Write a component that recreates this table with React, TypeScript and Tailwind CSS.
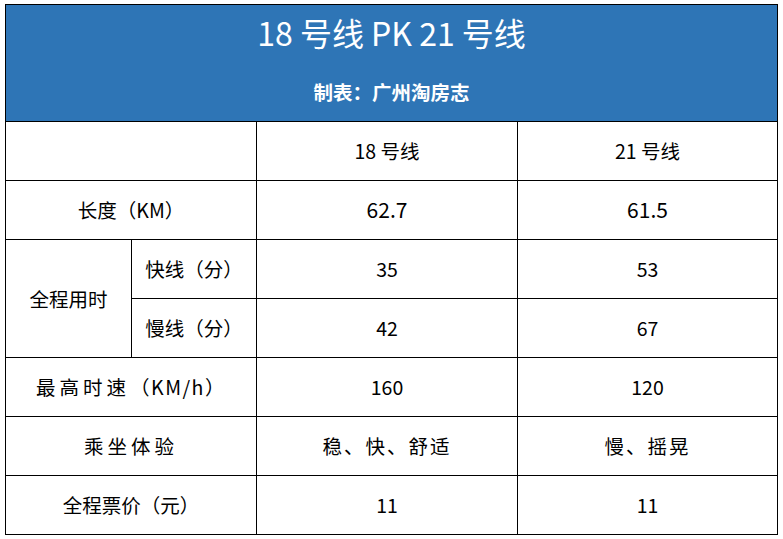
import React from "react";

const font = { fontFamily: '"Noto Sans CJK SC", "Noto Sans", sans-serif' };

export default function App() {
  const td = "border border-black text-center align-middle text-[19.5px] text-black p-0";
  return (
    <div className="w-[783px] h-[539px] bg-white pl-[5px] pt-[4px]" style={font}>
      <table className="border-collapse w-[772px] table-fixed">
        <colgroup>
          <col className="w-[126px]" />
          <col className="w-[125px]" />
          <col className="w-[261px]" />
          <col className="w-[260px]" />
        </colgroup>
        <tbody>
          <tr>
            <td colSpan={4} className="border border-black bg-[#2e75b6] p-0 h-[117px] align-top">
              <div className="flex flex-col items-center text-white pt-[7px]">
                <div className="text-[32px] leading-[40px]">18 号线 PK 21 号线</div>
                <div className="text-[19.5px] leading-[28px] font-bold mt-[26px]">制表：广州淘房志</div>
              </div>
            </td>
          </tr>
          <tr className="h-[59px]">
            <td colSpan={2} className={td}></td>
            <td className={td}>18 号线</td>
            <td className={td}>21 号线</td>
          </tr>
          <tr className="h-[59px]">
            <td colSpan={2} className={td}>长度（KM）</td>
            <td className={`${td} text-[21px]`}>62.7</td>
            <td className={`${td} text-[21px]`}>61.5</td>
          </tr>
          <tr className="h-[59px]">
            <td rowSpan={2} className={td}>全程用时</td>
            <td className={td}>快线（分）</td>
            <td className={td}>35</td>
            <td className={td}>53</td>
          </tr>
          <tr className="h-[59px]">
            <td className={td}>慢线（分）</td>
            <td className={td}>42</td>
            <td className={td}>67</td>
          </tr>
          <tr className="h-[59px]">
            <td colSpan={2} className={td}>
              <span className="tracking-[4px]">最高时速</span>
              <span className="tracking-[1.5px]">（KM/h）</span>
            </td>
            <td className={td}>160</td>
            <td className={td}>120</td>
          </tr>
          <tr className="h-[59px]">
            <td colSpan={2} className={`${td} tracking-[4px]`}>乘坐体验</td>
            <td className={`${td} tracking-[2px] text-[#333]`}>稳、快、舒适</td>
            <td className={`${td} tracking-[2px] text-[#333]`}>慢、摇晃</td>
          </tr>
          <tr className="h-[59px]">
            <td colSpan={2} className={td}>全程票价（元）</td>
            <td className={td}>11</td>
            <td className={td}>11</td>
          </tr>
        </tbody>
      </table>
    </div>
  );
}
